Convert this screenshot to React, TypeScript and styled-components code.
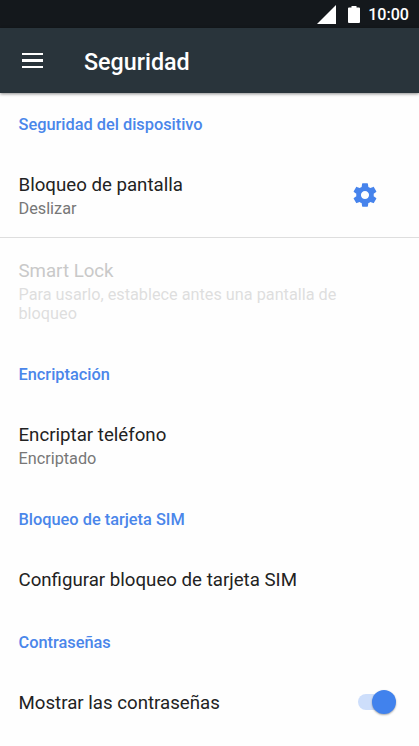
import React from "react";
import styled, { createGlobalStyle } from "styled-components";

const GlobalStyle = createGlobalStyle`
  * { box-sizing: border-box; }
  body { margin: 0; background: #fefefe; font-family: Roboto, sans-serif; }
`;

const Screen = styled.div`
  width: 419px;
  height: 746px;
  overflow: hidden;
  display: flex;
  flex-direction: column;
  background: #fefefe;
`;

const StatusBar = styled.div`
  height: 28px;
  flex: none;
  display: flex;
  align-items: center;
  justify-content: flex-end;
  padding-right: 10px;
  background: #14181c;
  color: #fff;
`;

const SignalIcon = styled.svg`
  width: 19px;
  height: 19px;
  margin-right: 12px;
`;

const BatteryIcon = styled.svg`
  width: 12px;
  height: 17px;
  margin-right: 8px;
`;

const Clock = styled.span`
  font-size: 16.1px;
  line-height: 28px;
  font-weight: 500;
  padding-top: 2px;
`;

const AppBar = styled.header`
  height: 65px;
  flex: none;
  display: flex;
  align-items: center;
  padding: 2px 0 0 22px;
  background: #29343b;
  color: #fff;
  box-shadow: 0 1px 3px rgba(0, 0, 0, 0.45);
`;

const MenuButton = styled.button`
  width: 21px;
  height: 15px;
  margin: 0 41px 2px 0;
  padding: 0;
  border: 0;
  background: none;
  display: flex;
  flex-direction: column;
  justify-content: space-between;
`;

const MenuLine = styled.span`
  height: 2.4px;
  width: 100%;
  background: #fff;
`;

const Title = styled.h1`
  margin: 0;
  font-size: 23.3px;
  line-height: 28px;
  font-weight: 500;
`;

const List = styled.main`
  padding-top: 3px;
`;

const SectionHeader = styled.h2`
  margin: 0;
  height: 56px;
  padding-left: 18.5px;
  font-size: 16.35px;
  line-height: 57px;
  font-weight: 500;
  color: #4a86ea;
`;

const Row = styled.div<{ $height: number }>`
  height: ${(p) => p.$height}px;
  display: flex;
  justify-content: space-between;
  padding: 22px 22px 0 18.5px;
`;

const Label = styled.div<{ $disabled?: boolean }>`
  font-size: 18.68px;
  line-height: 22px;
  color: ${(p) => (p.$disabled ? "#c9c9c9" : "#222")};
`;

const Summary = styled.div<{ $disabled?: boolean }>`
  width: 330px;
  margin-top: 3px;
  font-size: 16.25px;
  line-height: 19.2px;
  color: ${(p) => (p.$disabled ? "#dedede" : "#777")};
`;

const Divider = styled.div`
  height: 1px;
  background: #dedede;
`;

const GearIcon = styled.svg`
  flex: none;
  width: 28px;
  height: 28px;
  margin: 6.5px 17.700px 0 0;
`;

const Track = styled.div`
  flex: none;
  width: 36px;
  height: 16px;
  margin: 2px 3px 0 0;
  border-radius: 8px;
  background: #cddefb;
  display: flex;
  align-items: center;
  justify-content: flex-end;
`;

const Thumb = styled.div`
  width: 24px;
  height: 24px;
  margin-right: -2px;
  border-radius: 50%;
  background: #4182ed;
  box-shadow: 0 1px 2px rgba(0, 0, 0, 0.35);
`;

interface ItemProps {
  label: string;
  summary?: string;
  disabled?: boolean;
  height: number;
  children?: React.ReactNode;
}

const Item = ({ label, summary, disabled, height, children }: ItemProps) => (
  <Row $height={height}>
    <div>
      <Label $disabled={disabled}>{label}</Label>
      {summary && <Summary $disabled={disabled}>{summary}</Summary>}
    </div>
    {children}
  </Row>
);

export default function App() {
  return (
    <>
      <GlobalStyle />
      <Screen>
        <StatusBar>
          <SignalIcon viewBox="0 0 19 19">
            <path d="M19 0V19H0Z" fill="#fff" />
          </SignalIcon>
          <BatteryIcon viewBox="0 0 12 17">
            <path d="M3.5 0h5v1.6H11a1 1 0 0 1 1 1V16a1 1 0 0 1-1 1H1a1 1 0 0 1-1-1V2.6a1 1 0 0 1 1-1h2.5z" fill="#fff" />
          </BatteryIcon>
          <Clock>10:00</Clock>
        </StatusBar>
        <AppBar>
          <MenuButton aria-label="Menú">
            <MenuLine />
            <MenuLine />
            <MenuLine />
          </MenuButton>
          <Title>Seguridad</Title>
        </AppBar>
        <List>
          <SectionHeader>Seguridad del dispositivo</SectionHeader>
          <Item label="Bloqueo de pantalla" summary="Deslizar" height={85}>
            <GearIcon viewBox="0 0 24 24">
              <path
                fill="#4683ec"
                d="M19.430 12.980c.04-.32.07-.64.07-.98s-.03-.66-.07-.98l2.110-1.650c.19-.15.24-.42.12-.64l-2-3.460c-.12-.22-.39-.3-.61-.22l-2.490 1c-.52-.4-1.080-.73-1.690-.98l-.38-2.650C14.460 2.180 14.250 2 14 2h-4c-.25 0-.46.18-.49.42l-.38 2.650c-.61.25-1.170.59-1.690.98l-2.490-1c-.23-.09-.49 0-.61.22l-2 3.460c-.13.22-.07.49.12.64l2.110 1.650c-.04.32-.07.65-.07.98s.03.66.07.98l-2.110 1.650c-.19.15-.24.42-.12.64l2 3.460c.12.22.39.3.61.22l2.490-1c.52.4 1.080.73 1.690.98l.38 2.650c.03.24.24.42.49.42h4c.25 0 .46-.18.49-.42l.38-2.650c.61-.25 1.170-.59 1.690-.98l2.490 1c.23.09.49 0 .61-.22l2-3.460c.12-.22.07-.49-.12-.64l-2.110-1.650zM12 15.500c-1.930 0-3.500-1.570-3.500-3.500s1.570-3.500 3.500-3.500 3.500 1.570 3.500 3.500-1.570 3.500-3.500 3.500z"
              />
            </GearIcon>
          </Item>
          <Divider />
          <Item
            label="Smart Lock"
            summary="Para usarlo, establece antes una pantalla de bloqueo"
            height={108}
            disabled
          />
          <SectionHeader>Encriptación</SectionHeader>
          <Item label="Encriptar teléfono" summary="Encriptado" height={89} />
          <SectionHeader>Bloqueo de tarjeta SIM</SectionHeader>
          <Item label="Configurar bloqueo de tarjeta SIM" height={67} />
          <SectionHeader>Contraseñas</SectionHeader>
          <Item label="Mostrar las contraseñas" height={76}>
            <Track role="switch" aria-checked="true">
              <Thumb />
            </Track>
          </Item>
        </List>
      </Screen>
    </>
  );
}
